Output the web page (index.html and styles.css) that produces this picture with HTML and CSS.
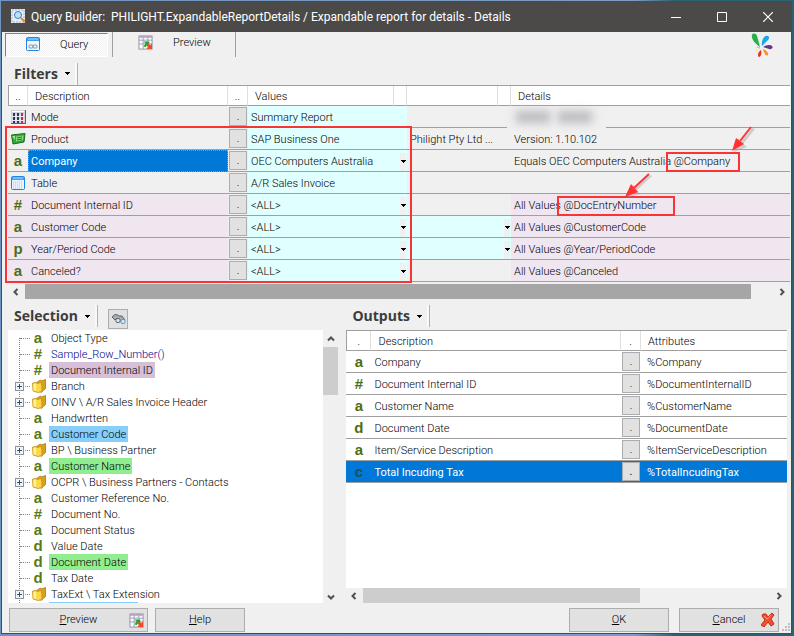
FILE: index.html
```html
<!DOCTYPE html>
<html lang="en">

<head>
    <meta charset="UTF-8">
    <meta name="viewport" content="width=device-width, initial-scale=1.0">
    <title>Query Builder</title>
    <link rel="stylesheet" href="styles.css">
</head>

<body>
    <svg class="sprite" width="0" height="0">
        <symbol id="report" viewBox="0 0 16 16">
            <rect x="1" y="1" width="14" height="14" fill="#fafafa" stroke="#8f93a8" />
            <path d="M1 5.500H15M1 9.500H15M5.500 1V15M10.500 1V15" stroke="#9a9db5" fill="none" />
            <path d="M1 1H15V3H1z" fill="#b6a5c4" />
            <path d="M6 7h6v5l-2-2-2 3-2-1 2-3z" fill="#22a52e" />
            <path d="M15 9v6H9l2-2-2-2 2-2 2 2z" fill="#f04a24" />
        </symbol>
        <symbol id="form" viewBox="0 0 14 14">
            <rect x="0.500" y="0.500" width="13" height="13" rx="1" fill="#eaf4ff" stroke="#2185e0" />
            <path d="M1 1h12v3H1z" fill="#39a0f4" />
            <path d="M2 2h10" stroke="#a9dcff" />
            <path d="M2 6H12M2 8H12M2 10H12M2 12H12" stroke="#b9bfe0" stroke-dasharray="1 1" />
        </symbol>
        <symbol id="query" viewBox="0 0 14 14">
            <rect x="0.500" y="0.500" width="13" height="13" rx="1" fill="#eef6ff" stroke="#2185e0" />
            <path d="M1 1h12v3H1z" fill="#39a0f4" />
            <path d="M2 2h10" stroke="#a9dcff" />
            <rect x="3" y="8" width="4" height="3" rx="1" fill="none" stroke="#8a93a5" />
            <rect x="7" y="8" width="4" height="3" rx="1" fill="none" stroke="#8a93a5" />
        </symbol>
        <symbol id="folder" viewBox="0 0 14 14">
            <path d="M4.500 3.500L8.500 1L9.500 2L13.500 0.500V9.500L9 13.500z" fill="#d8a21c" stroke="#a87908" stroke-width="0.800" />
            <path d="M0.500 4L4 3.500L5 4.500L9.500 3.500L10 12.500L6 13.500L1 12z" fill="#ffd84a" stroke="#c2900e" stroke-width="0.800" />
            <path d="M1.500 5H4V11.500H1.500z" fill="#fff3a0" />
        </symbol>
        <symbol id="up" viewBox="0 0 8 8">
            <path d="M1 5.500L4 2.500L7 5.500" fill="none" stroke="#505050" stroke-width="2" />
        </symbol>
        <symbol id="down" viewBox="0 0 8 8">
            <path d="M1 2.500L4 5.500L7 2.500" fill="none" stroke="#505050" stroke-width="2" />
        </symbol>
        <symbol id="left" viewBox="0 0 8 8">
            <path d="M5.500 1L2.500 4L5.500 7" fill="none" stroke="#505050" stroke-width="2" />
        </symbol>
        <symbol id="right" viewBox="0 0 8 8">
            <path d="M2.500 1L5.500 4L2.500 7" fill="none" stroke="#505050" stroke-width="2" />
        </symbol>
        <symbol id="caret" viewBox="0 0 5 3">
            <path d="M0 0h5v1H4v1H3v1H2V2H1V1H0z" fill="#000" />
        </symbol>
    </svg>

    <main class="window">
        <header class="titleBar">
            <svg width="15" height="15" viewBox="0 0 15 15">
                <rect width="14" height="14" fill="#e8eef5" />
                <path d="M1 1H13V13H1z" fill="none" stroke="#9db4cf" stroke-dasharray="2 1" />
                <circle cx="7" cy="6" r="3.500" fill="#b9e2fb" stroke="#3f7ec0" />
                <path d="M10 9l4 4" stroke="#e08a2c" stroke-width="2" />
            </svg>
            <h1 class="title">Query Builder: &nbsp;PHILIGHT.ExpandableReportDetails / Expandable report for details - Details</h1>
            <button class="windowButton" aria-label="Minimize"><svg width="10" height="10"><path d="M0 5.500H10" stroke="#fff" /></svg></button>
            <button class="windowButton" aria-label="Maximize"><svg width="10" height="10"><path d="M0.500 0.500H9.500V9.500H0.500z" fill="none" stroke="#fff" /></svg></button>
            <button class="windowButton" aria-label="Close"><svg width="10" height="10"><path d="M0 0L10 10M10 0L0 10" stroke="#fff" stroke-width="1.200" /></svg></button>
        </header>

        <nav class="toolBar">
            <button class="tab active"><svg width="14" height="14"><use href="#query" /></svg><span>Query</span></button>
            <button class="tab"><svg width="15" height="15"><use href="#report" /></svg><span>Preview</span></button>
            <svg class="logo" width="22" height="24" viewBox="0 0 22 24">
                <path d="M9 14C3 10 0 5 1 2C2 0 5 0 6 3C7 6 8 10 9 14z" fill="#27b04a" />
                <path d="M11 13C10 8 13 3 15 3C18 2 19 5 17 7C15 9 13 11 11 13z" fill="#12a9ee" />
                <path d="M12 14C15 12 19 11 21 13C23 15 20 17 18 16z" fill="#6b3296" />
                <path d="M12 16C15 17 18 20 17 22C15 24 13 20 12 16z" fill="#f7941d" />
                <path d="M10 17C11 20 10 24 8 24C6 23 7 19 10 17z" fill="#e8312c" />
                <path d="M9 16L5 18 4 17z" fill="#f9ee3a" />
                <path d="M9 15L6 14z" stroke="#f3a3c4" />
            </svg>
        </nav>

        <section class="filters">
            <div class="heading">
                <h2>Filters</h2>
                <button class="menuButton" aria-label="Filters menu"><svg width="5" height="3"><use href="#caret" /></svg></button>
            </div>
            <table class="grid filterGrid">
                <colgroup>
                    <col class="colButton">
                    <col class="colDescription">
                    <col class="colButton">
                    <col class="colValue">
                    <col class="colArrow">
                    <col class="colSecond">
                    <col class="colArrow">
                    <col>
                </colgroup>
                <thead>
                    <tr>
                        <th class="center">..</th>
                        <th>Description</th>
                        <th class="center">..</th>
                        <th>Values</th>
                        <th></th>
                        <th></th>
                        <th></th>
                        <th>Details</th>
                    </tr>
                </thead>
                <tbody>
                    <tr>
                        <td class="icon"><svg width="15" height="14"><path d="M0 0h15v14H0z" fill="#d3d4da" /><path d="M1 1.500H13M1 6H13M1 10H13" stroke="#fff" /><path d="M3 3v10M7 3v10" stroke="#27386e" stroke-width="2" stroke-dasharray="3 1" /><path d="M11 3v10" stroke="#b23345" stroke-width="2" stroke-dasharray="3 1" /><path d="M14.500 0v14M0 13.500H15" stroke="#5c6272" /></svg></td>
                        <td>Mode</td>
                        <td class="action"><button>.</button></td>
                        <td class="value" colspan="2">Summary Report</td>
                        <td colspan="2"></td>
                        <td><div class="hidden"><i></i><i></i></div></td>
                    </tr>
                    <tr>
                        <td class="icon"><svg width="15" height="14"><path d="M0.500 3L14 1.500L13 10L2 12z" fill="#35a836" stroke="#176c1c" /><path d="M5 4.500L12.500 3.500L12 8L5 9.500z" fill="#8fdc80" /><path d="M6 6l5-1M6 8l5-1" stroke="#207026" /><path d="M1 4l3 0v4z" fill="#8af080" /></svg></td>
                        <td>Product</td>
                        <td class="action"><button>.</button></td>
                        <td class="value" colspan="2">SAP Business One</td>
                        <td colspan="2">Philight Pty Ltd ...</td>
                        <td>Version: 1.10.102</td>
                    </tr>
                    <tr>
                        <td class="icon">a</td>
                        <td class="focused">Company</td>
                        <td class="action"><button>.</button></td>
                        <td class="value" colspan="2"><select aria-label="Company"><option>OEC Computers Australia</option></select></td>
                        <td colspan="2"></td>
                        <td>Equals OEC Computers Australia @Company</td>
                    </tr>
                    <tr>
                        <td class="icon"><svg width="14" height="14"><use href="#form" /></svg></td>
                        <td>Table</td>
                        <td class="action"><button>.</button></td>
                        <td class="value" colspan="2">A/R Sales Invoice</td>
                        <td colspan="2"></td>
                        <td></td>
                    </tr>
                    <tr class="field">
                        <td class="icon">#</td>
                        <td>Document Internal ID</td>
                        <td class="action"><button>.</button></td>
                        <td class="value" colspan="2"><select aria-label="Document Internal ID"><option>&lt;ALL&gt;</option></select></td>
                        <td class="blank" colspan="2"></td>
                        <td>All Values @DocEntryNumber</td>
                    </tr>
                    <tr class="field">
                        <td class="icon">a</td>
                        <td>Customer Code</td>
                        <td class="action"><button>.</button></td>
                        <td class="value" colspan="2"><select aria-label="Customer Code from"><option>&lt;ALL&gt;</option></select></td>
                        <td class="value" colspan="2"><select aria-label="Customer Code to"><option></option></select></td>
                        <td>All Values @CustomerCode</td>
                    </tr>
                    <tr class="field">
                        <td class="icon">p</td>
                        <td>Year/Period Code</td>
                        <td class="action"><button>.</button></td>
                        <td class="value" colspan="2"><select aria-label="Period from"><option>&lt;ALL&gt;</option></select></td>
                        <td class="value" colspan="2"><select aria-label="Period to"><option></option></select></td>
                        <td>All Values @Year/PeriodCode</td>
                    </tr>
                    <tr class="field">
                        <td class="icon">a</td>
                        <td>Canceled?</td>
                        <td class="action"><button>.</button></td>
                        <td class="value" colspan="2"><select aria-label="Canceled"><option>&lt;ALL&gt;</option></select></td>
                        <td class="blank" colspan="2"></td>
                        <td>All Values @Canceled</td>
                    </tr>
                </tbody>
            </table>
            <div class="scrollX dark">
                <svg width="8" height="8"><use href="#left" /></svg>
                <div class="track"><div class="thumb"></div></div>
                <svg width="8" height="8"><use href="#right" /></svg>
            </div>

            <div class="mark markRows"></div>
            <div class="mark markCompany"></div>
            <div class="mark markEntry"></div>
            <svg class="arrow arrowCompany" width="30" height="30" viewBox="0 0 30 30">
                <path d="M25 4L13 19L17 22L4 27L8 13L11 17L22 3z" fill="#999" opacity="0.400" />
                <path d="M21 2L10 16" stroke="#f33" stroke-width="2" />
                <path d="M2 26L6 13L14 19z" fill="#f33" />
            </svg>
            <svg class="arrow arrowEntry" width="30" height="30" viewBox="0 0 30 30">
                <path d="M29 5L14 19L17 23L4 27L10 14L13 17L27 4z" fill="#999" opacity="0.400" />
                <path d="M26 3L11 17" stroke="#f33" stroke-width="2" />
                <path d="M2 26L8 13L15 21z" fill="#f33" />
            </svg>
        </section>

        <div class="panes">
            <section class="selection">
                <div class="heading">
                    <h2>Selection</h2>
                    <button class="menuButton" aria-label="Selection menu"><svg width="5" height="3"><use href="#caret" /></svg></button>
                    <button class="findButton" aria-label="Find"><svg width="16" height="12"><path d="M2 4L5 1.500L8 2L9 3L12 3L15 7L13 9L9 8L7 5L5 7z" fill="#a9adb0" stroke="#60656a" /><circle cx="8" cy="7.500" r="2.200" fill="#d8e6ee" stroke="#5a6670" /><circle cx="13" cy="8.500" r="2.200" fill="#cfe8f9" stroke="#6c93b5" /></svg></button>
                </div>
                <div class="treeBox">
                    <ul class="tree">
                        <li><b>a</b><span>Object Type</span></li>
                        <li><b>#</b><span class="formula">Sample_Row_Number()</span></li>
                        <li><b>#</b><span class="purple">Document Internal ID</span></li>
                        <li><button class="expand" aria-label="Expand"></button><svg width="14" height="14"><use href="#folder" /></svg><span>Branch</span></li>
                        <li><button class="expand" aria-label="Expand"></button><svg width="14" height="14"><use href="#folder" /></svg><span>OINV \ A/R Sales Invoice Header</span></li>
                        <li><b>a</b><span>Handwrtten</span></li>
                        <li><b>a</b><span class="blue">Customer Code</span></li>
                        <li><button class="expand" aria-label="Expand"></button><svg width="14" height="14"><use href="#folder" /></svg><span>BP \ Business Partner</span></li>
                        <li><b>a</b><span class="green">Customer Name</span></li>
                        <li><button class="expand" aria-label="Expand"></button><svg width="14" height="14"><use href="#folder" /></svg><span>OCPR \ Business Partners - Contacts</span></li>
                        <li><b>a</b><span>Customer Reference No.</span></li>
                        <li><b>#</b><span>Document No.</span></li>
                        <li><b>a</b><span>Document Status</span></li>
                        <li><b>d</b><span>Value Date</span></li>
                        <li><b>d</b><span class="green">Document Date</span></li>
                        <li><b>d</b><span>Tax Date</span></li>
                        <li><button class="expand" aria-label="Expand"></button><svg width="14" height="14"><use href="#folder" /></svg><span>TaxExt \ Tax Extension</span></li>
                        <li><b></b><span class="blue next"></span></li>
                    </ul>
                    <div class="scrollY">
                        <svg width="8" height="8"><use href="#up" /></svg>
                        <div class="track"><div class="thumb"></div></div>
                        <svg width="8" height="8"><use href="#down" /></svg>
                    </div>
                </div>
            </section>

            <section class="outputs">
                <div class="heading">
                    <h2>Outputs</h2>
                    <button class="menuButton" aria-label="Outputs menu"><svg width="5" height="3"><use href="#caret" /></svg></button>
                </div>
                <div class="outputBox">
                    <table class="grid outputGrid">
                        <colgroup>
                            <col class="colIcon">
                            <col>
                            <col class="colButton">
                            <col class="colAttributes">
                        </colgroup>
                        <thead>
                            <tr>
                                <th class="center">.</th>
                                <th>Description</th>
                                <th class="center">.</th>
                                <th>Attributes</th>
                            </tr>
                        </thead>
                        <tbody>
                            <tr><td class="icon">a</td><td>Company</td><td class="action"><button>.</button></td><td class="attribute">%Company</td></tr>
                            <tr><td class="icon">#</td><td>Document Internal ID</td><td class="action"><button>.</button></td><td class="attribute">%DocumentInternalID</td></tr>
                            <tr><td class="icon">a</td><td>Customer Name</td><td class="action"><button>.</button></td><td class="attribute">%CustomerName</td></tr>
                            <tr><td class="icon">d</td><td>Document Date</td><td class="action"><button>.</button></td><td class="attribute">%DocumentDate</td></tr>
                            <tr><td class="icon">a</td><td>Item/Service Description</td><td class="action"><button>.</button></td><td class="attribute">%ItemServiceDescription</td></tr>
                            <tr class="selected"><td class="icon">c</td><td>Total Incuding Tax</td><td class="action"><button>.</button></td><td class="attribute">%TotalIncudingTax</td></tr>
                        </tbody>
                    </table>
                    <div class="scrollX">
                        <svg width="8" height="8"><use href="#left" /></svg>
                        <div class="track"><div class="thumb"></div></div>
                        <svg width="8" height="8"><use href="#right" /></svg>
                    </div>
                </div>
            </section>
        </div>

        <footer class="footer">
            <button class="button wide"><span><u>P</u>review</span><svg width="15" height="15"><use href="#report" /></svg></button>
            <button class="button"><span><u>H</u>elp</span></button>
            <button class="button ok"><span><u>O</u>K</span></button>
            <button class="button cancel"><span><u>C</u>ancel</span><svg width="14" height="14" viewBox="0 0 14 14"><path d="M2 1L5 1L7 4L11 0L13 2L10 6L13 11L10 13L7 9L3 14L0 12L4 7L1 3z" fill="#f4502c" stroke="#c22c14" /><path d="M3 3l3 3 4-4" stroke="#ff9a78" fill="none" /></svg></button>
            <svg class="grip" width="8" height="8"><path d="M6 0h2v2H6zM3 3h2v2H3zM6 3h2v2H6zM0 6h2v2H0zM3 6h2v2H3zM6 6h2v2H6z" fill="#bfbfbf" /></svg>
        </footer>
    </main>
</body>

</html>
```

FILE: styles.css
```css
* {
    box-sizing: border-box;
}

body {
    margin: 0;
    padding: 1px 2px 2px 1px;
    min-height: 100vh;
    display: flex;
    font-family: Roboto, "Liberation Sans", sans-serif;
    font-weight: 300;
    font-size: 11px;
    line-height: 16px;
    color: #000;
    background: linear-gradient(90deg, #6d93c0 0, #7d9cc4 80%, #2a6275 85%, #2a6275 100%);
}

h1,
h2,
ul {
    margin: 0;
    padding: 0;
}

button,
select {
    font: inherit;
    color: inherit;
    padding: 0;
    border: none;
    background: none;
}

svg {
    display: block;
    flex: none;
}

.sprite {
    position: absolute;
}

.window {
    flex: 1;
    min-width: 0;
    display: flex;
    flex-direction: column;
    background: #f0f0f0;
    border: 1px solid #4b4a48;
    border-top: none;
}

.titleBar {
    display: flex;
    align-items: center;
    height: 31px;
    padding-left: 9px;
    background: #4b4a48;
    color: #fff;
}

.title {
    flex: 1;
    margin-left: 5px;
    font-size: 12px;
    font-weight: 400;
    white-space: nowrap;
}

.windowButton {
    display: flex;
    justify-content: center;
    width: 46px;
}

/* tool bar */

.toolBar {
    display: flex;
    height: 26px;
    padding-left: 3px;
}

.tab {
    display: flex;
    align-items: center;
    gap: 20px;
    width: 124px;
    height: 25px;
    padding: 0 0 5px 25px;
    border-right: 1px solid #a0a0a0;
}

.tab.active {
    width: 103px;
    height: 24px;
    margin: 1px 4px 0 0;
    padding: 0 0 2px 20px;
    border: 1px solid #fff;
    border-top-color: #808080;
    border-left-color: #808080;
    background: repeating-conic-gradient(#fff 0 25%, #f0f0f0 0 50%) 0 0 / 2px 2px;
}

.tab.active + .tab {
    border-left: 1px solid #a0a0a0;
}

.tab span {
    padding-top: 1px;
}

.logo {
    margin: 1px 18px 0 auto;
}

/* section headings */

.heading {
    display: flex;
    align-items: center;
    padding-left: 6px;
}

.heading h2 {
    font-family: "Open Sans", "Noto Sans", sans-serif;
    font-size: 14px;
    line-height: 20px;
    font-weight: 700;
    color: #3c3c3c;
}

.menuButton {
    display: flex;
    align-items: center;
    height: 22px;
    padding: 0 7px;
    border-right: 1px solid #b0b0b0;
    box-shadow: inset -2px 0 #fafafa;
}

.findButton {
    display: flex;
    align-items: center;
    justify-content: center;
    width: 20px;
    height: 20px;
    margin: 5px 0 0 10px;
    border: 1px solid #adadad;
    background: #e1e1e1;
}

/* grids */

.grid {
    width: 100%;
    table-layout: fixed;
    border-collapse: separate;
    border-spacing: 0;
    border-top: 1px solid #a0a0a0;
}

.grid th {
    height: 20px;
    padding: 2px 7px 0;
    font-weight: 300;
    text-align: left;
    background: #fff;
    border-right: 1px solid #e0e0e0;
    border-bottom: 1px solid #a0a0a0;
}

.grid th:first-child {
    border-left: 1px solid #a0a0a0;
}

.grid th:last-child {
    border-right: none;
}

.grid th.center {
    padding: 2px 0 0;
    text-align: center;
}

.grid td {
    height: 22px;
    padding: 2px 3px 0;
    white-space: nowrap;
    border-bottom: 1px solid #a0a0a0;
}

.grid td.icon {
    padding: 0;
    font-family: "Liberation Sans", sans-serif;
    font-size: 15px;
    font-weight: 700;
    text-align: center;
    color: #4c6e14;
}

.grid td.icon svg {
    margin: 0 auto;
}

.grid td.action {
    padding: 0 1px;
}

.action button {
    display: block;
    width: 18px;
    height: 19px;
    border: 1px solid #adadad;
    background: #e1e1e1;
    color: #000;
}

.colButton {
    width: 20px;
}

.colDescription {
    width: 200px;
}

.colValue {
    width: 146px;
}

.colArrow {
    width: 13px;
}

.colSecond {
    width: 91px;
}

.colIcon {
    width: 25px;
}

.colAttributes {
    width: 146px;
}

/* filters */

.filters {
    position: relative;
    padding: 0 1px 0 6px;
}

.filters .heading {
    height: 27px;
    padding-top: 4px;
}

.field td {
    background: #f0e6f0;
}

.field td.action,
.field td.blank {
    background: #f0f0f0;
}

.grid td.value {
    padding-right: 1px;
    background: #e0ffff;
}

.grid td.focused {
    padding: 1px 2px 0;
    color: #fff;
    font-weight: 400;
    background: #0078d7;
    border: 1px dotted #e8862a;
}

.value select {
    display: block;
    width: 100%;
    height: 18px;
    appearance: none;
    background:
        linear-gradient(#000, #000) right 0 top 7px / 5px 1px,
        linear-gradient(#000, #000) right 1px top 8px / 3px 1px,
        linear-gradient(#000, #000) right 2px top 9px / 1px 1px,
        linear-gradient(#f0f0f0, #f0f0f0) right 0 top 0 / 6px 18px;
    background-repeat: no-repeat;
}

.hidden {
    display: flex;
    align-items: center;
    gap: 8px;
    width: 99px;
    height: 21px;
    margin: -2px 0 -1px -7px;
    padding-left: 9px;
    background: #efefef;
}

.hidden i {
    width: 34px;
    height: 12px;
    background: #bcbcc2;
    filter: blur(4px);
}

.mark {
    position: absolute;
    border: 2px solid #f93434;
}

.markRows {
    left: 3px;
    top: 68px;
    width: 407px;
    height: 157px;
}

.markCompany {
    left: 664px;
    top: 94px;
    width: 74px;
    height: 20px;
}

.markEntry {
    left: 555px;
    top: 138px;
    width: 118px;
    height: 20px;
}

.arrow {
    position: absolute;
}

.arrowCompany {
    left: 728px;
    top: 67px;
}

.arrowEntry {
    left: 621px;
    top: 113px;
}

/* scroll bars */

.scrollX {
    display: flex;
    align-items: center;
    gap: 5px;
    height: 15px;
    padding: 0 4px;
    background: #f0f0f0;
}

.track {
    flex: 1;
    align-self: stretch;
}

.thumb {
    width: 68%;
    height: 100%;
    background: #cdcdcd;
}

.filters .scrollX {
    margin-top: 2px;
}

.dark .thumb {
    width: 97%;
    background: #a6a6a6;
}

.scrollY {
    display: flex;
    flex-direction: column;
    align-items: center;
    gap: 4px;
    width: 15px;
    padding: 5px 0 2px;
}

.scrollY .thumb {
    width: 15px;
    height: 20%;
}

/* selection and outputs */

.panes {
    flex: 1;
    display: flex;
    gap: 8px;
    padding: 0 4px 0 6px;
}

.panes .heading {
    height: 31px;
    padding-top: 3px;
}

.selection {
    flex: 3 1 0;
    display: flex;
    flex-direction: column;
}

.outputs {
    flex: 4 1 0;
    display: flex;
    flex-direction: column;
}

.treeBox {
    flex: 1;
    display: flex;
}

.tree {
    position: relative;
    flex: 1;
    height: 273px;
    padding-left: 7px;
    overflow: hidden;
    list-style: none;
    background: #fff;
}

.tree::before {
    content: "";
    position: absolute;
    left: 11px;
    top: 8px;
    bottom: 0;
    border-left: 1px dotted #808080;
}

.tree li {
    position: relative;
    display: flex;
    align-items: center;
    height: 16px;
    padding-left: 17px;
}

.tree li::before {
    content: "";
    position: absolute;
    left: 5px;
    top: 8px;
    width: 10px;
    border-top: 1px dotted #808080;
}

.tree b {
    width: 12px;
    font-family: "Liberation Sans", sans-serif;
    font-size: 15px;
    font-weight: 700;
    text-align: center;
    color: #587a16;
}

.tree li > svg {
    margin-right: -2px;
}

.tree span {
    height: 16px;
    margin-left: 5px;
    padding: 1px 2px 0;
    line-height: 15px;
}

.expand {
    position: absolute;
    left: 0;
    top: 4px;
    width: 9px;
    height: 9px;
    border: 1px solid #919191;
    background:
        linear-gradient(#2b4b96, #2b4b96) center / 5px 1px no-repeat,
        linear-gradient(#2b4b96, #2b4b96) center / 1px 5px no-repeat,
        #f4f4f4;
}

.formula {
    color: #00008b;
}

.purple {
    background: #d8bfd8;
}

.blue {
    background: #87cefa;
}

.green {
    background: #90ee90;
}

.next {
    width: 89px;
}

.outputBox {
    flex: 1;
    display: flex;
    flex-direction: column;
    background: #fff;
}

.outputBox .scrollX {
    margin-top: auto;
}

.grid td.attribute {
    padding: 2px 6px 0;
}

.selected td {
    color: #fff;
    font-weight: 400;
    background: #0078d7;
}

.grid .selected td.icon {
    color: #1d5260;
}

/* footer */

.footer {
    position: relative;
    display: flex;
    gap: 7px;
    height: 30px;
    padding: 5px 12px 1px 7px;
}

.button {
    position: relative;
    display: flex;
    align-items: center;
    justify-content: center;
    width: 90px;
    height: 24px;
    border: 1px solid #adadad;
    background: #e1e1e1;
}

.button svg {
    position: absolute;
    right: 3px;
}

.wide {
    width: 139px;
}

.ok {
    width: 100px;
    margin-left: auto;
}

.cancel {
    width: 100px;
    margin-left: 3px;
}

.grip {
    position: absolute;
    right: 1px;
    bottom: 2px;
}
```
